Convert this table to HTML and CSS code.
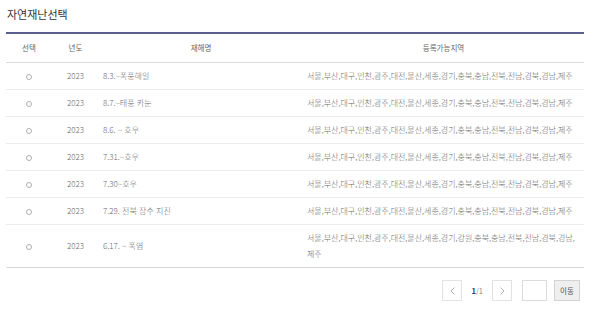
FILE: index.html
```html
<!DOCTYPE html>
<html lang="ko">
<head>
<meta charset="utf-8">
<title>자연재난선택</title>
<link rel="stylesheet" href="styles.css">
</head>
<body>
<div class="wrap">
  <h2 class="title">자연재난선택</h2>
  <table class="list">
    <colgroup>
      <col class="c-sel"><col class="c-year"><col class="c-name"><col class="c-area">
    </colgroup>
    <thead>
      <tr><th>선택</th><th>년도</th><th>재해명</th><th>등록가능지역</th></tr>
    </thead>
    <tbody>
      <tr><td class="ctr"><input type="radio" name="d" class="radio"></td><td class="ctr">2023</td><td>8.3.~폭풍해일</td><td class="area">서울,부산,대구,인천,광주,대전,울산,세종,경기,충북,충남,전북,전남,경북,경남,제주</td></tr>
      <tr><td class="ctr"><input type="radio" name="d" class="radio"></td><td class="ctr">2023</td><td>8.7.~태풍 카눈</td><td class="area">서울,부산,대구,인천,광주,대전,울산,세종,경기,충북,충남,전북,전남,경북,경남,제주</td></tr>
      <tr><td class="ctr"><input type="radio" name="d" class="radio"></td><td class="ctr">2023</td><td>8.6. ~ 호우</td><td class="area">서울,부산,대구,인천,광주,대전,울산,세종,경기,충북,충남,전북,전남,경북,경남,제주</td></tr>
      <tr><td class="ctr"><input type="radio" name="d" class="radio"></td><td class="ctr">2023</td><td>7.31.~호우</td><td class="area">서울,부산,대구,인천,광주,대전,울산,세종,경기,충북,충남,전북,전남,경북,경남,제주</td></tr>
      <tr><td class="ctr"><input type="radio" name="d" class="radio"></td><td class="ctr">2023</td><td>7.30~호우</td><td class="area">서울,부산,대구,인천,광주,대전,울산,세종,경기,충북,충남,전북,전남,경북,경남,제주</td></tr>
      <tr><td class="ctr"><input type="radio" name="d" class="radio"></td><td class="ctr">2023</td><td>7.29. 전북 장수 지진</td><td class="area">서울,부산,대구,인천,광주,대전,울산,세종,경기,충북,충남,전북,전남,경북,경남,제주</td></tr>
      <tr><td class="ctr"><input type="radio" name="d" class="radio"></td><td class="ctr">2023</td><td>6.17. ~ 폭염</td><td class="area">서울,부산,대구,인천,광주,대전,울산,세종,경기,강원,충북,충남,전북,전남,경북,경남,<wbr>제주</td></tr>
    </tbody>
  </table>
  <div class="pager">
    <button class="pg-btn" type="button" aria-label="이전">
      <svg width="5" height="8" viewBox="0 0 5 8"><polyline points="4.5,0.5 1,4 4.5,7.5" fill="none" stroke="#999" stroke-width="0.8"/></svg>
    </button>
    <span class="pg-num"><b>1</b>/1</span>
    <button class="pg-btn" type="button" aria-label="다음">
      <svg width="5" height="8" viewBox="0 0 5 8"><polyline points="0.5,0.5 4,4 0.5,7.5" fill="none" stroke="#999" stroke-width="0.8"/></svg>
    </button>
    <input class="pg-input" type="text">
    <button class="pg-go" type="button">이동</button>
  </div>
</div>
</body>
</html>
```

FILE: styles.css
```css
html, body {
  margin: 0;
  padding: 0;
  background: #fff;
}
body {
  font-family: "Noto Sans CJK KR", "Noto Sans", sans-serif;
  color: #666;
}
.wrap {
  width: 578px;
  padding: 6px 0 0 6px;
}
.title {
  margin: 0 0 0 1px;
  font-size: 11px;
  line-height: 16px;
  font-weight: 400;
  color: #333;
}
.list {
  width: 578px;
  margin-top: 10px;
  border-collapse: collapse;
  table-layout: fixed;
  border-top: 2px solid #5a5e8e;
  border-bottom: 1px solid #d6d6d6;
  font-size: 8px;
  line-height: 16px;
  font-weight: 300;
}
.c-sel { width: 46px; }
.c-year { width: 47px; }
.c-name { width: 204px; }
.c-area { width: 281px; }
.list th {
  font-weight: 400;
  font-size: 7.5px;
  color: #666;
  text-align: center;
  padding: 6px 0;
  border-bottom: 1px solid #dcdcdc;
}
.list td {
  padding: 5px 0 5px 4px;
  color: #6a6a6a;
  border-top: 1px solid #ececec;
  text-align: left;
  vertical-align: middle;
}
.list td.area {
  word-break: keep-all;
}
.list tbody tr:first-child td { border-top: 0; }
.list td.ctr {
  text-align: center;
  padding-left: 0;
  padding-right: 0;
}
.radio {
  -webkit-appearance: none;
  appearance: none;
  display: inline-block;
  vertical-align: middle;
  width: 6px;
  height: 6px;
  margin: 0;
  border: 1px solid #b0b0b0;
  border-radius: 50%;
  background: #fff;
}
.pager {
  display: flex;
  justify-content: flex-end;
  align-items: center;
  margin-top: 12px;
  padding-right: 4px;
  font-size: 7.5px;
}
.pg-btn {
  width: 20px;
  height: 21px;
  padding: 0;
  border: 1px solid #e2e2e2;
  background: #fff;
  display: flex;
  align-items: center;
  justify-content: center;
}
.pg-num {
  margin: 0 9px;
  color: #888;
}
.pg-num b {
  color: #2c3b86;
  font-weight: 700;
}
.pg-input {
  width: 25px;
  height: 21px;
  box-sizing: border-box;
  margin: 0 0 0 10px;
  padding: 0;
  border: 1px solid #dcdcdc;
  background: #fff;
}
.pg-go {
  width: 26px;
  height: 21px;
  margin-left: 7px;
  padding: 0;
  border: 1px solid #d2d2d2;
  background: #efefef;
  color: #555;
  font-family: "Noto Sans CJK KR", sans-serif;
  font-size: 7.5px;
}
```
